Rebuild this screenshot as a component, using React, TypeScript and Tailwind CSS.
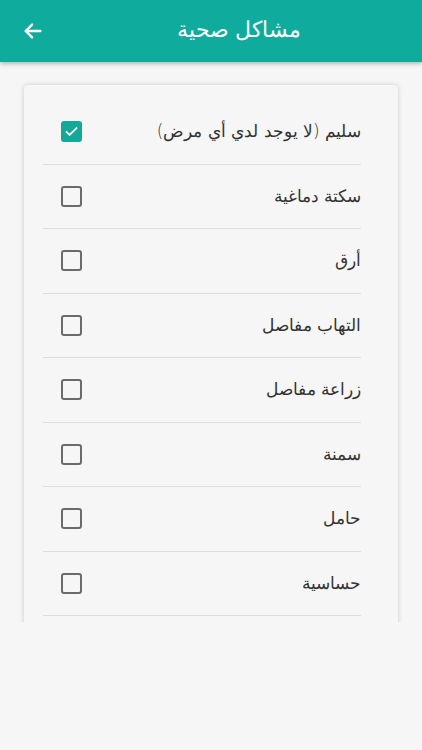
import React from 'react';

const items = [
  { label: 'سليم (لا يوجد لدي أي مرض)', checked: true },
  { label: 'سكتة دماغية', checked: false },
  { label: 'أرق', checked: false },
  { label: 'التهاب مفاصل', checked: false },
  { label: 'زراعة مفاصل', checked: false },
  { label: 'سمنة', checked: false },
  { label: 'حامل', checked: false },
  { label: 'حساسية', checked: false },
];

function Box({ checked }: { checked: boolean }) {
  if (checked) {
    return (
      <div className="w-[21px] h-[21px] rounded-[3px] bg-[#14a898] flex items-center justify-center">
        <svg width="15" height="15" viewBox="0 0 24 24" fill="none" stroke="white" strokeWidth="3" strokeLinecap="round" strokeLinejoin="round">
          <path d="M4 12.5l5 5L20 6.5" />
        </svg>
      </div>
    );
  }
  return <div className="w-[21px] h-[21px] rounded-[3px] border-[2.5px] border-[#6b6b6b]" />;
}

export default function App() {
  return (
    <div className="w-[422px] h-[750px] bg-[#f6f6f6] flex flex-col" style={{ fontFamily: '"DejaVu Sans", sans-serif' }}>
      <header className="h-[62px] bg-[#0fab9c] flex items-center px-[22px] shadow-[0_2px_4px_rgba(0,0,0,0.25)] relative z-10">
        <svg width="22" height="22" viewBox="0 0 24 24" fill="none" stroke="white" strokeWidth="2.6" strokeLinecap="round" strokeLinejoin="round">
          <path d="M20 12H4M11 5l-7 7 7 7" />
        </svg>
        <h1 className="flex-1 text-center text-white text-[22px] font-light pl-[34px] pb-[3px]">مشاكل صحية</h1>
      </header>
      <div className="h-[560px] overflow-hidden pt-[23px] px-[24px]">
        <div dir="rtl" className="bg-[#f6f6f6] rounded-[4px] shadow-[0_0_5px_rgba(0,0,0,0.18)] pt-[15px] pr-[37px] pl-[19px] pb-[30px]">
          {items.map((it) => (
            <div key={it.label} className="h-[64.5px] border-b border-[#dedede] flex items-center justify-between">
              <span className="text-[17px] text-[#333] font-light">{it.label}</span>
              <div className="ml-[18px]">
                <Box checked={it.checked} />
              </div>
            </div>
          ))}
        </div>
      </div>
    </div>
  );
}
